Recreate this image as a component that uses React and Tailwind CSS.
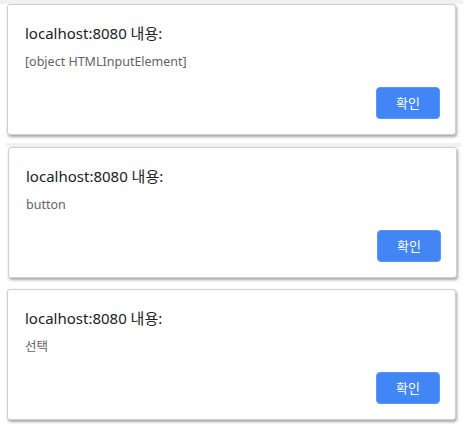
import React from 'react';

const font = { fontFamily: '"Noto Sans", "Noto Sans CJK KR", sans-serif' };

// one Chrome-style alert box
const AlertBox = ({ message, className }) => {
    return (
        <div
            className={`w-[449px] h-[131px] bg-white border border-[#cfcfcf] rounded-[3px] shadow-[1px_2px_3px_rgba(0,0,0,0.35)] flex flex-col pl-[17px] pr-[15px] pt-[17px] pb-[15px] ${className}`}
        >
            <h2 className="text-[15px] leading-[22px] text-[#202124]">localhost:8080 내용:</h2>
            <p className="mt-[9px] text-[12.5px] leading-[18px] text-[#5f6368]">{message}</p>
            <div className="mt-auto flex justify-end">
                <button
                    type="button"
                    className="w-[64px] h-[32px] rounded-[4px] bg-[#4285f4] border border-[#5b96f6] text-white text-[13px] leading-none"
                >
                    확인
                </button>
            </div>
        </div>
    );
};

const App = () => {
    return (
        <div className="w-[469px] h-[437px] bg-white overflow-hidden" style={font}>
            {/* first capture */}
            <div className="h-[143px]">
                <div className="h-[4px] w-[463px] bg-[#f1f1f1]" />
                <AlertBox className="ml-[7px]" message="[object HTMLInputElement]" />
            </div>

            {/* second capture */}
            <div className="h-[146px]">
                <div className="h-[4px] ml-[6px] w-[455px] bg-[#f1f1f1]" />
                <AlertBox className="ml-[8px]" message="button" />
            </div>

            {/* third capture */}
            <AlertBox className="ml-[7px]" message="선택" />
        </div>
    );
};

export default App;
